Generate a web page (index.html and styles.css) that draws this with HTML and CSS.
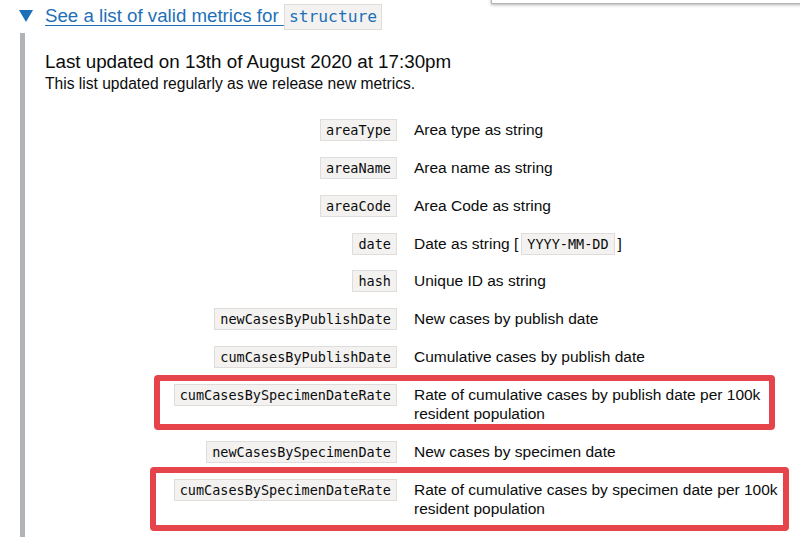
FILE: index.html
```html
<!DOCTYPE html>
<html lang="en">
<head>
<meta charset="utf-8">
<title>Valid metrics</title>
<link rel="stylesheet" href="styles.css">
</head>
<body>
<div class="page">
  <div class="popup"></div>
  <div class="summary">
    <span class="arrow"></span>
    <span class="summary-text"><a class="link" href="#">See a list of valid metrics for </a><code class="code code-lg">structure</code></span>
  </div>
  <div class="panel">
    <p class="updated">Last updated on 13th of August 2020 at 17:30pm</p>
    <p class="note">This list updated regularly as we release new metrics.</p>
    <dl class="metrics">
      <div class="row"><dt><code class="code">areaType</code></dt><dd>Area type as string</dd></div>
      <div class="row"><dt><code class="code">areaName</code></dt><dd>Area name as string</dd></div>
      <div class="row"><dt><code class="code">areaCode</code></dt><dd>Area Code as string</dd></div>
      <div class="row"><dt><code class="code">date</code></dt><dd>Date as string [<code class="code code-inline">YYYY-MM-DD</code>]</dd></div>
      <div class="row"><dt><code class="code">hash</code></dt><dd>Unique ID as string</dd></div>
      <div class="row"><dt><code class="code">newCasesByPublishDate</code></dt><dd>New cases by publish date</dd></div>
      <div class="row"><dt><code class="code">cumCasesByPublishDate</code></dt><dd>Cumulative cases by publish date</dd></div>
      <div class="row"><dt><code class="code">cumCasesBySpecimenDateRate</code></dt><dd>Rate of cumulative cases by publish date per 100k resident population</dd></div>
      <div class="row"><dt><code class="code">newCasesBySpecimenDate</code></dt><dd>New cases by specimen date</dd></div>
      <div class="row"><dt><code class="code">cumCasesBySpecimenDateRate</code></dt><dd>Rate of cumulative cases by specimen date per 100k resident population</dd></div>
    </dl>
  </div>
  <div class="mark mark-1"></div>
  <div class="mark mark-2"></div>
</div>
</body>
</html>
```

FILE: styles.css
```css
html, body {
  margin: 0;
  padding: 0;
  overflow: hidden;
  background: #ffffff;
}

.page {
  position: relative;
  width: 800px;
  height: 537px;
  overflow: hidden;
  font-family: "Liberation Sans", Arial, sans-serif;
  color: #0b0c0c;
}

.popup {
  position: absolute;
  top: -12px;
  left: 491px;
  width: 330px;
  height: 14px;
  background: #ffffff;
  border: 1px solid #b5b5b5;
  box-shadow: 0 1px 3px rgba(0, 0, 0, 0.3);
}

.summary {
  display: flex;
  align-items: center;
  gap: 12px;
  height: 23px;
  padding: 4px 0 0 19px;
}

.arrow {
  width: 0;
  height: 0;
  border-left: 7px solid transparent;
  border-right: 7px solid transparent;
  border-top: 12px solid #1d70b8;
}

.summary-text {
  font-size: 18.7px;
  line-height: 23px;
  white-space: nowrap;
}

.link {
  color: #1d70b8;
  text-decoration: underline;
  text-decoration-thickness: 1px;
  text-underline-offset: 3px;
}

.code {
  font-family: "DejaVu Sans Mono", "Liberation Mono", monospace;
  font-size: 13.5px;
  line-height: 1;
  color: #0b0c0c;
  background: #f3f2f1;
  border: 1px solid #dedddc;
  padding: 2px 5px;
}

.code-lg {
  font-size: 16.3px;
  color: #1d70b8;
  padding: 2px 4px 3px;
}

.code-inline {
  margin: 0 3px 0 3px;
}

.panel {
  margin: 6px 0 0 20px;
  border-left: 5px solid #b1b4b6;
  padding: 17px 0 40px 20px;
}

.updated {
  margin: 0;
  font-size: 18.8px;
  line-height: 24px;
}

.note {
  margin: 0;
  font-size: 15.6px;
  line-height: 19px;
}

.metrics {
  margin: 27px 0 0 0;
  display: flex;
  flex-direction: column;
  gap: 18.45px;
}

.row {
  display: grid;
  grid-template-columns: 352px 376px;
  column-gap: 17px;
  font-size: 15.5px;
  line-height: 19.4px;
}

.row dt {
  margin: 0;
  text-align: right;
  white-space: nowrap;
}

.row dd {
  margin: 0;
}

.mark {
  position: absolute;
  border: 6px solid #e5444b;
  border-radius: 4px;
  box-sizing: border-box;
}

.mark-1 {
  left: 154px;
  top: 375px;
  width: 621px;
  height: 55px;
}

.mark-2 {
  left: 150px;
  top: 467px;
  width: 639px;
  height: 64px;
}
```
